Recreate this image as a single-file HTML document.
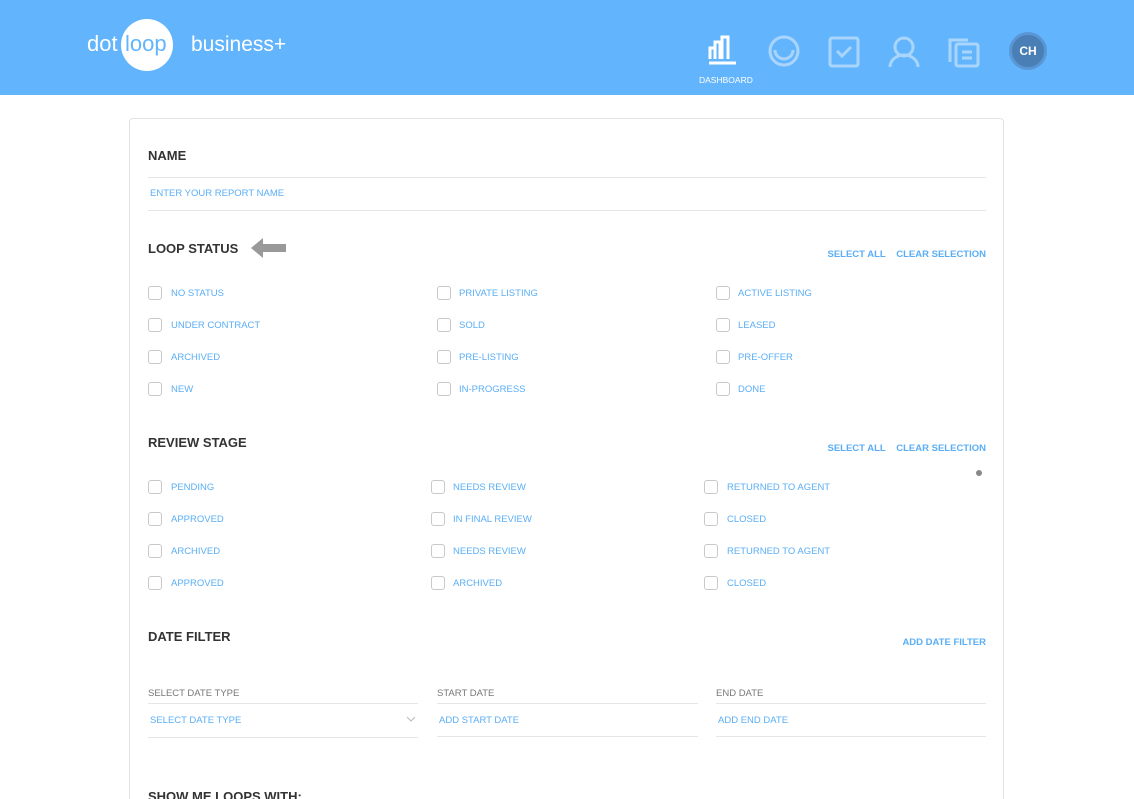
<!DOCTYPE html>
<html><head><meta charset="utf-8"><style>
*{margin:0;padding:0;box-sizing:border-box}
html,body{width:1134px;height:799px;overflow:hidden}
body{background:#fff;font-family:"Liberation Sans",sans-serif;position:relative}
.hdr{position:absolute;left:0;top:0;width:1134px;height:95px;background:#62b5fc}
.a{position:absolute;white-space:nowrap}
.card{position:absolute;left:129px;top:118px;width:875px;height:720px;border:1px solid #e2e2e2;border-radius:4px}
.h{font-size:13px;font-weight:bold;color:#333}
.l{font-size:9.5px;color:#5aaef6}
.lb{font-size:9.5px;color:#5aaef6;font-weight:bold}
.g{font-size:9.5px;color:#777}
.cb{position:absolute;width:14px;height:14px;border:1.3px solid #c9c9c9;border-radius:3px}
.ln{position:absolute;height:1px;background:#e6e6e6}
.r{position:absolute;right:148px;white-space:nowrap}
</style></head><body>
<div class="hdr"></div>
<div class="a" style="left:87px;top:31px;font-size:22px;color:#fff">dot</div>
<div class="a" style="left:121px;top:19px;width:52px;height:52px;border-radius:50%;background:#fff"></div>
<div class="a" style="left:125px;top:31px;font-size:22px;color:#62b5fc">loop</div>
<div class="a" style="left:191px;top:33px;font-size:21px;color:#fff">business+</div>
<svg class="a" style="left:700px;top:30px" width="340" height="40" viewBox="0 0 340 40">
<g fill="none" stroke="#fff" stroke-width="3"><path d="M10 29V18h5v11M15 29V12h5v17M22 29V7h6v22"/><path d="M9 33h27"/></g>
<g fill="none" stroke="#a9d5fd" stroke-width="3">
<circle cx="84" cy="21" r="14"/><path d="M75 20a9 9 0 0 0 18 0"/>
<rect x="130" y="8" width="28" height="28" rx="2"/><path d="M137 21l5 5 9-9"/>
<circle cx="204" cy="17" r="9"/><path d="M190 37a14 12 0 0 1 28 0"/>
<path d="M250 32V10h18"/><rect x="256" y="14" width="22" height="22" rx="2"/><path d="M262 22h10M262 28h10"/>
</g></svg>
<div class="a" style="left:699px;top:75px;font-size:8.5px;color:#fff">DASHBOARD</div>
<div class="a" style="left:1009px;top:32px;width:38px;height:38px;border-radius:50%;background:#4a7fb5;border:3px solid #5a96d6;color:#fff;font-size:12px;font-weight:bold;text-align:center;line-height:32px">CH</div>

<div class="card"></div>
<div class="a h" style="left:148px;top:148px">NAME</div>
<div class="ln" style="left:148px;top:177px;width:838px"></div>
<div class="a l" style="left:150px;top:188px">ENTER YOUR REPORT NAME</div>
<div class="ln" style="left:148px;top:210px;width:838px"></div>
<div class="a h" style="left:148px;top:241px">LOOP STATUS</div>
<svg class="a" style="left:251px;top:237px" width="36" height="22"><path d="M0 11L12 1v6h23v8H12v6z" fill="#999"/></svg>
<div class="r lb" style="top:249px">SELECT ALL&nbsp;&nbsp;&nbsp;&nbsp;CLEAR SELECTION</div>

<div class="a h" style="left:148px;top:435px">REVIEW STAGE</div>
<div class="r lb" style="top:443px">SELECT ALL&nbsp;&nbsp;&nbsp;&nbsp;CLEAR SELECTION</div>
<div class="a" style="left:976px;top:470px;width:6px;height:6px;border-radius:50%;background:#888"></div>

<div class="a h" style="left:148px;top:629px">DATE FILTER</div>
<div class="r lb" style="top:637px">ADD DATE FILTER</div>
<div class="a g" style="left:148px;top:688px">SELECT DATE TYPE</div>
<div class="a g" style="left:437px;top:688px">START DATE</div>
<div class="a g" style="left:716px;top:688px">END DATE</div>
<div class="ln" style="left:148px;top:703px;width:270px"></div>
<div class="ln" style="left:437px;top:703px;width:261px"></div>
<div class="ln" style="left:716px;top:703px;width:270px"></div>
<div class="a l" style="left:150px;top:715px">SELECT DATE TYPE</div>
<svg class="a" style="left:406px;top:716px" width="10" height="6"><path d="M1 1l4 4 4-4" stroke="#bbb" fill="none"/></svg>
<div class="a l" style="left:439px;top:715px">ADD START DATE</div>
<div class="a l" style="left:718px;top:715px">ADD END DATE</div>
<div class="ln" style="left:148px;top:737px;width:270px"></div>
<div class="ln" style="left:437px;top:736px;width:261px"></div>
<div class="ln" style="left:716px;top:736px;width:270px"></div>
<div class="a h" style="left:148px;top:789px">SHOW ME LOOPS WITH:</div>

<div class="cb" style="left:148px;top:286px"></div><div class="a l" style="left:171px;top:288px">NO STATUS</div>
<div class="cb" style="left:437px;top:286px"></div><div class="a l" style="left:459px;top:288px">PRIVATE LISTING</div>
<div class="cb" style="left:716px;top:286px"></div><div class="a l" style="left:738px;top:288px">ACTIVE LISTING</div>
<div class="cb" style="left:148px;top:318px"></div><div class="a l" style="left:171px;top:320px">UNDER CONTRACT</div>
<div class="cb" style="left:437px;top:318px"></div><div class="a l" style="left:459px;top:320px">SOLD</div>
<div class="cb" style="left:716px;top:318px"></div><div class="a l" style="left:738px;top:320px">LEASED</div>
<div class="cb" style="left:148px;top:350px"></div><div class="a l" style="left:171px;top:352px">ARCHIVED</div>
<div class="cb" style="left:437px;top:350px"></div><div class="a l" style="left:459px;top:352px">PRE-LISTING</div>
<div class="cb" style="left:716px;top:350px"></div><div class="a l" style="left:738px;top:352px">PRE-OFFER</div>
<div class="cb" style="left:148px;top:382px"></div><div class="a l" style="left:171px;top:384px">NEW</div>
<div class="cb" style="left:437px;top:382px"></div><div class="a l" style="left:459px;top:384px">IN-PROGRESS</div>
<div class="cb" style="left:716px;top:382px"></div><div class="a l" style="left:738px;top:384px">DONE</div>

<div class="cb" style="left:148px;top:480px"></div><div class="a l" style="left:171px;top:482px">PENDING</div>
<div class="cb" style="left:431px;top:480px"></div><div class="a l" style="left:453px;top:482px">NEEDS REVIEW</div>
<div class="cb" style="left:704px;top:480px"></div><div class="a l" style="left:727px;top:482px">RETURNED TO AGENT</div>
<div class="cb" style="left:148px;top:512px"></div><div class="a l" style="left:171px;top:514px">APPROVED</div>
<div class="cb" style="left:431px;top:512px"></div><div class="a l" style="left:453px;top:514px">IN FINAL REVIEW</div>
<div class="cb" style="left:704px;top:512px"></div><div class="a l" style="left:727px;top:514px">CLOSED</div>
<div class="cb" style="left:148px;top:544px"></div><div class="a l" style="left:171px;top:546px">ARCHIVED</div>
<div class="cb" style="left:431px;top:544px"></div><div class="a l" style="left:453px;top:546px">NEEDS REVIEW</div>
<div class="cb" style="left:704px;top:544px"></div><div class="a l" style="left:727px;top:546px">RETURNED TO AGENT</div>
<div class="cb" style="left:148px;top:576px"></div><div class="a l" style="left:171px;top:578px">APPROVED</div>
<div class="cb" style="left:431px;top:576px"></div><div class="a l" style="left:453px;top:578px">ARCHIVED</div>
<div class="cb" style="left:704px;top:576px"></div><div class="a l" style="left:727px;top:578px">CLOSED</div>
</body></html>
